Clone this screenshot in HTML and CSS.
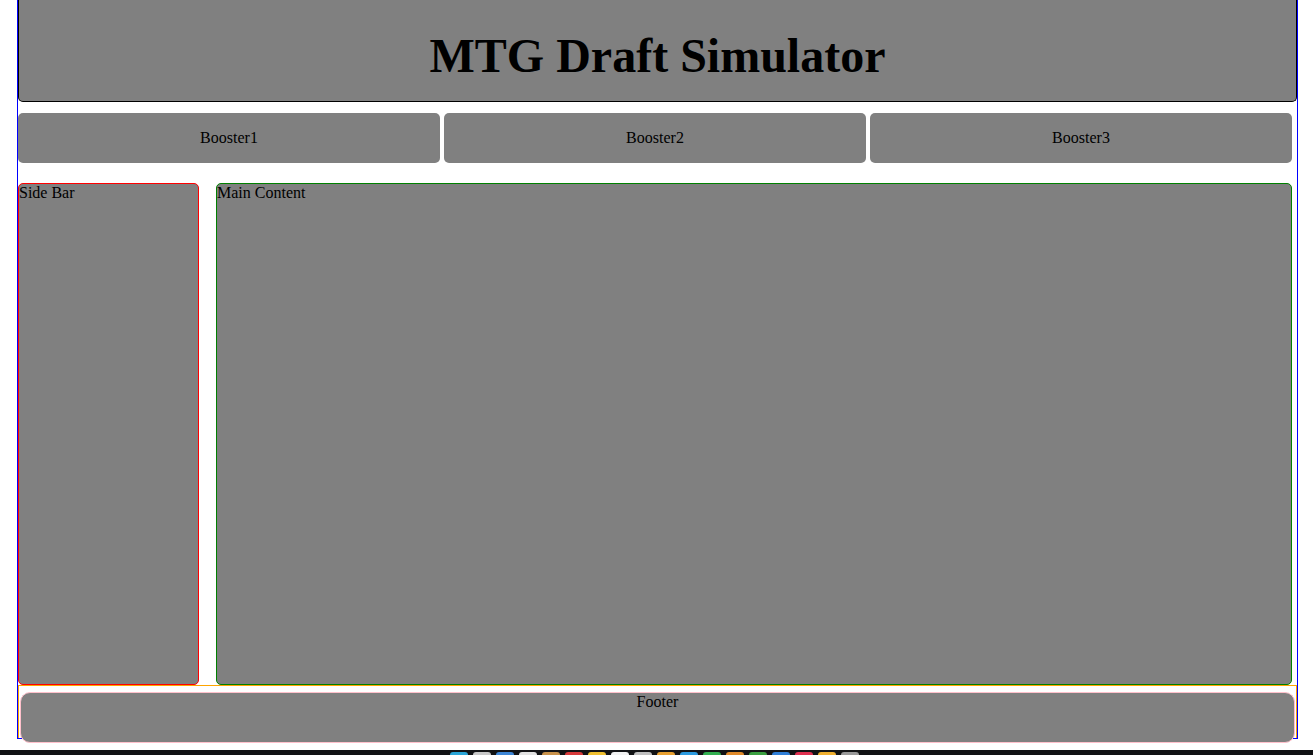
FILE: index.html
```html
<!DOCTYPE html>
<html>
<head>
<meta charset="utf-8">
<title>MTG Draft Simulator</title>
<link rel="stylesheet" href="styles.css">
</head>
<body>
<div class="page">
  <header class="header">
    <h1 class="title">MTG Draft Simulator</h1>
  </header>
  <nav class="boosters">
    <div class="booster">Booster1</div>
    <div class="booster">Booster2</div>
    <div class="booster">Booster3</div>
  </nav>
  <div class="content-row">
    <aside class="sidebar">Side Bar</aside>
    <main class="main">Main Content</main>
  </div>
  <div class="footer-wrap">
    <footer class="footer">Footer</footer>
  </div>
</div>
<div class="dock">
  <span class="dock-icon c1"></span><span class="dock-icon c2"></span><span class="dock-icon c3"></span><span class="dock-icon c4"></span><span class="dock-icon c5"></span><span class="dock-icon c6"></span><span class="dock-icon c7"></span><span class="dock-icon c8"></span><span class="dock-icon c9"></span><span class="dock-icon c10"></span><span class="dock-icon c11"></span><span class="dock-icon c12"></span><span class="dock-icon c13"></span><span class="dock-icon c14"></span><span class="dock-icon c15"></span><span class="dock-icon c16"></span><span class="dock-icon c17"></span><span class="dock-icon c18"></span>
</div>
</body>
</html>
```

FILE: styles.css
```css
html, body {
  margin: 0;
  padding: 0;
  background: #ffffff;
  font-family: "Liberation Serif", "Times New Roman", serif;
  font-size: 16px;
  color: #000000;
  overflow: hidden;
}

.page {
  margin-left: 17px;
  width: 1279px;
  border: 1px solid #0000ff;
  border-top: none;
}

.header {
  background: #808080;
  border: 1px solid #000000;
  border-top: none;
  border-radius: 0 0 5px 5px;
  padding: 29px 0 19px;
}

.title {
  margin: 0;
  font-size: 48px;
  line-height: 53px;
  font-weight: bold;
  text-align: center;
}

.boosters {
  display: flex;
  gap: 4px;
  width: 1274px;
  margin-top: 11px;
}

.booster {
  flex: 1;
  height: 50px;
  background: #808080;
  border-radius: 5px;
  display: flex;
  align-items: center;
  justify-content: center;
  line-height: 18px;
}

.content-row {
  display: flex;
  gap: 17px;
  width: 1274px;
  margin-top: 20px;
  height: 502px;
}

.sidebar {
  width: 179px;
  background: #808080;
  border: 1px solid #ff0000;
  border-radius: 5px;
  line-height: 18px;
}

.main {
  flex: 1;
  background: #808080;
  border: 1px solid #008000;
  border-radius: 5px;
  line-height: 18px;
}

.footer-wrap {
  height: 52px;
  border: 1px solid #ffa500;
  border-bottom: none;
}

.footer {
  margin: 6px 0 0 1px;
  width: 1273px;
  height: 49px;
  background: #808080;
  border: 1px solid #ffc0cb;
  border-radius: 10px;
  text-align: center;
  line-height: 18px;
}

.dock {
  margin-top: 11px;
  height: 6px;
  background: #111214;
  display: flex;
  align-items: flex-end;
  gap: 5px;
  padding-left: 450px;
}

.dock-icon {
  width: 18px;
  height: 4px;
  border-radius: 3px 3px 0 0;
}

.c1 { background: #2aa6d8; }
.c2 { background: #c8c8c8; }
.c3 { background: #3d86d6; }
.c4 { background: #e2e2e2; }
.c5 { background: #c9924a; }
.c6 { background: #d83a3a; }
.c7 { background: #f0c030; }
.c8 { background: #f2f2f2; }
.c9 { background: #bfbfbf; }
.c10 { background: #e8a030; }
.c11 { background: #2c9be0; }
.c12 { background: #32b050; }
.c13 { background: #e08a2a; }
.c14 { background: #3aa040; }
.c15 { background: #2f7fd8; }
.c16 { background: #e03050; }
.c17 { background: #f0b030; }
.c18 { background: #9a9a9a; }
```
